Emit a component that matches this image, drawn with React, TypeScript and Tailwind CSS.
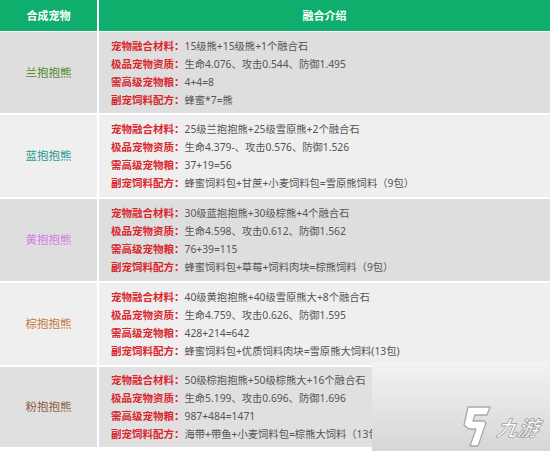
import React from "react";

type Row = { name: string; color: string; bg: string; h: string; lines: [string, string][] };

const rows: Row[] = [
  {
    name: "兰抱抱熊",
    color: "text-[#4f8a2c]",
    bg: "bg-[#dedede]",
    h: "h-[83px]",
    lines: [
      ["宠物融合材料：", "15级熊+15级熊+1个融合石"],
      ["极品宠物资质：", "生命4.076、攻击0.544、防御1.495"],
      ["需高级宠物粮：", "4+4=8"],
      ["副宠饲料配方：", "蜂蜜*7=熊"],
    ],
  },
  {
    name: "蓝抱抱熊",
    color: "text-[#2a9a96]",
    bg: "bg-[#efefef]",
    h: "h-[84px]",
    lines: [
      ["宠物融合材料：", "25级兰抱抱熊+25级雪原熊+2个融合石"],
      ["极品宠物资质：", "生命4.379-、攻击0.576、防御1.526"],
      ["需高级宠物粮：", "37+19=56"],
      ["副宠饲料配方：", "蜂蜜饲料包+甘蔗+小麦饲料包=雪原熊饲料（9包）"],
    ],
  },
  {
    name: "黄抱抱熊",
    color: "text-[#d77ce6]",
    bg: "bg-[#dedede]",
    h: "h-[84px]",
    lines: [
      ["宠物融合材料：", "30级蓝抱抱熊+30级棕熊+4个融合石"],
      ["极品宠物资质：", "生命4.598、攻击0.612、防御1.562"],
      ["需高级宠物粮：", "76+39=115"],
      ["副宠饲料配方：", "蜂蜜饲料包+草莓+饲料肉块=棕熊饲料（9包）"],
    ],
  },
  {
    name: "棕抱抱熊",
    color: "text-[#c97a40]",
    bg: "bg-[#efefef]",
    h: "h-[84px]",
    lines: [
      ["宠物融合材料：", "40级黄抱抱熊+40级雪原熊大+8个融合石"],
      ["极品宠物资质：", "生命4.759、攻击0.626、防御1.595"],
      ["需高级宠物粮：", "428+214=642"],
      ["副宠饲料配方：", "蜂蜜饲料包+优质饲料肉块=雪原熊大饲料(13包)"],
    ],
  },
  {
    name: "粉抱抱熊",
    color: "text-[#8d5e45]",
    bg: "bg-[#e0e0e0]",
    h: "h-[82px]",
    lines: [
      ["宠物融合材料：", "50级棕抱抱熊+50级棕熊大+16个融合石"],
      ["极品宠物资质：", "生命5.199、攻击0.696、防御1.696"],
      ["需高级宠物粮：", "987+484=1471"],
      ["副宠饲料配方：", "海带+带鱼+小麦饲料包=棕熊大饲料（13包）"],
    ],
  },
];

export default function App() {
  return (
    <div className="relative w-[550px] h-[451px] overflow-hidden bg-white font-['Noto_Sans_CJK_SC','Noto_Sans',sans-serif]">
      <div className="flex h-[32px] bg-[#0fae6c] text-white font-bold text-[11px] border-b border-white">
        <div className="w-[97px] flex items-center justify-center">合成宠物</div>
        <div className="w-[2px] bg-white" />
        <div className="flex-1 flex items-center justify-center">融合介绍</div>
      </div>
      {rows.map((r, i) => (
        <div key={i} className={`flex ${r.h} ${r.bg} border-b-2 border-white`}>
          <div className={`w-[97px] flex items-center justify-center text-[11.5px] ${r.color}`}>{r.name}</div>
          <div className="w-[2px] bg-white" />
          <div className="flex-1 flex flex-col justify-center pl-[12px] text-[10.5px] leading-[17px] whitespace-nowrap">
            {r.lines.map(([k, v], j) => (
              <div key={j}>
                <span className="text-[#d9262d] font-bold">{k}</span>
                <span className="text-[#555555] font-['Noto_Sans','Noto_Sans_CJK_SC',sans-serif] text-[10.3px]">{v}</span>
              </div>
            ))}
          </div>
        </div>
      ))}
      <div className="absolute left-[372px] top-[362px] right-0 bottom-0 bg-gradient-to-b from-[#f3f3f3] to-[#d6d6d6]">
        <div className="absolute left-[88px] top-[42px] flex items-center">
          <svg width="36" height="46" viewBox="0 0 36 46">
            <path
              d="M8 3 L30 3 L27 11 L15 11 L13 17 L24 17 L26 19 L18 42 L10 42 L16 25 L9 25 L4 21 Z"
              fill="#ffffff"
              stroke="#a8a8a8"
              strokeWidth="1.3"
              strokeLinejoin="round"
            />
          </svg>
          <span className="ml-[1px] italic text-[21px] leading-none text-white font-bold [-webkit-text-stroke:0.8px_#a0a0a0] [transform:skewX(-10deg)]">
            九游
          </span>
        </div>
      </div>
    </div>
  );
}
